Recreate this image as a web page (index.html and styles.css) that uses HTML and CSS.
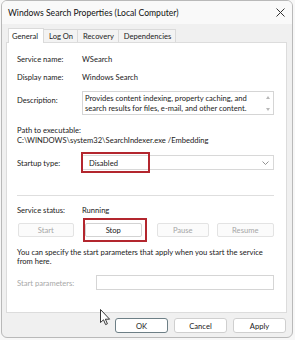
FILE: index.html
```html
<!DOCTYPE html>
<html>
<head>
<meta charset="utf-8">
<link rel="stylesheet" href="styles.css">
</head>
<body>
<div class="window">
  <div class="titlebar">
    <span class="title">Windows Search Properties (Local Computer)</span>
    <svg class="close" width="9" height="9" viewBox="0 0 9 9"><path d="M0.5 0.5 L8.5 8.5 M8.5 0.5 L0.5 8.5" stroke="#333" stroke-width="1"/></svg>
  </div>
  <div class="body">
    <div class="tabs">
      <div class="tab active">General</div>
      <div class="tab">Log On</div>
      <div class="tab">Recovery</div>
      <div class="tab">Dependencies</div>
    </div>
    <div class="panel">
      <div class="row r-name"><span class="label">Service name:</span><span>WSearch</span></div>
      <div class="row r-display"><span class="label">Display name:</span><span>Windows Search</span></div>
      <div class="row r-desc">
        <span class="label desc-label">Description:</span>
        <div class="descbox">
          <div class="desctext">Provides content indexing, property caching, and search results for files, e-mail, and other content.</div>
          <div class="scroll"><span class="arr up"></span><span class="arr down"></span></div>
        </div>
      </div>
      <div class="path-label">Path to executable:</div>
      <div class="path-value">C:\WINDOWS\system32\SearchIndexer.exe /Embedding</div>
      <div class="row r-startup">
        <span class="label">Startup type:</span>
        <div class="combo">
          <span class="combo-val">Disabled</span>
          <svg class="chev" width="7" height="4" viewBox="0 0 7 4"><path d="M0.5 0.5 L3.5 3.5 L6.5 0.5" fill="none" stroke="#777" stroke-width="0.8"/></svg>
          <div class="hl hl-combo"></div>
        </div>
      </div>
      <div class="sep"></div>
      <div class="row r-status"><span class="label">Service status:</span><span>Running</span></div>
      <div class="svc-buttons">
        <div class="btn disabled b-start">Start</div>
        <div class="btn b-stop">Stop<div class="hl hl-stop"></div></div>
        <div class="btn disabled b-pause">Pause</div>
        <div class="btn disabled b-resume">Resume</div>
      </div>
      <div class="info">You can specify the start parameters that apply when you start the service from here.</div>
      <div class="row r-params"><span class="label params-label">Start parameters:</span><div class="input"></div></div>
    </div>
    <div class="footer">
      <div class="btn fbtn default">OK</div>
      <div class="btn fbtn">Cancel</div>
      <div class="btn fbtn">Apply</div>
    </div>
    <svg class="cursor" width="11" height="17" viewBox="0 0 11 17"><path d="M0.5 0.5 L0.5 13.5 L3.5 10.8 L5.6 15.6 L7.4 14.8 L5.4 10.2 L9.6 10.2 Z" fill="#fff" stroke="#222" stroke-width="0.9" stroke-linejoin="round"/></svg>
  </div>
</div>
</body>
</html>
```
FILE: styles.css
```css
* { box-sizing: border-box; }
html, body { margin: 0; padding: 0; background: #f7f7f7; }
body {
  width: 295px; height: 340px; overflow: hidden;
  font-family: Lato, "Noto Sans", sans-serif;
  font-size: 7.6px; color: #1a1a1a;
}
.window {
  position: relative;
  margin-left: 1px;
  width: 292px; height: 338px;
  border: 1px solid #b9b9b9;
  border-radius: 6px;
  background: #f0f0f0;
  overflow: hidden;
}
.titlebar {
  height: 23px; background: #f9f9f9;
  display: flex; align-items: center; justify-content: space-between;
  padding: 0 6px 0 6px;
}
.title { font-size: 8.6px; color: #111; }
.close { margin-right: 1px; }
.body { position: relative; padding: 4px 5px 0 4px; }
.tabs { display: flex; height: 14px; align-items: flex-end; padding-left: 2px; }
.tab {
  height: 13px; padding: 0 4px 0 5px; line-height: 12px;
  border: 1px solid #dadada; border-bottom: none; border-left: none;
  background: #f3f3f3; color: #222;
}
.tab.active {
  height: 15px; background: #fff; border-left: 1px solid #dadada;
  margin-bottom: -1px; position: relative; z-index: 1; padding: 0 5px 0 3px; line-height: 14px;
}
.panel {
  background: #fff; border: 1px solid #dcdcdc;
  height: 271px;
  padding: 10px 12px 0 10px;
}
.row { display: flex; align-items: center; }
.label { width: 65px; flex: none; }
.r-name { height: 12px; }
.r-display { height: 12px; margin-top: 6px; }
.r-desc { margin-top: 8px; align-items: flex-start; }
.desc-label { margin-top: 4px; }
.descbox {
  width: 194px; height: 24px; border: 1px solid #d5d5d5;
  display: flex; padding: 1px 0 0 2px;
}
.desctext { flex: 1; line-height: 10px; color: #222; }
.scroll { width: 10px; display: flex; flex-direction: column; align-items: center; justify-content: space-between; padding: 3px 0 3px; }
.arr { width: 0; height: 0; border-left: 2.5px solid transparent; border-right: 2.5px solid transparent; }
.arr.up { border-bottom: 3px solid #b8b8b8; }
.arr.down { border-top: 3px solid #b8b8b8; }
.path-label { margin-top: 9px; height: 12px; line-height: 12px; }
.path-value { height: 11px; line-height: 11px; margin-top: -1px; }
.r-startup { margin-top: 9px; }
.combo {
  position: relative; width: 194px; height: 15px; border: 1px solid #d8d8d8;
  display: flex; align-items: center; justify-content: space-between; padding: 0 4px 0 6px;
}
.hl { position: absolute; border: 2px solid #b3262e; }
.hl-combo { left: -2px; top: -4px; width: 69px; height: 21px; }
.sep { margin-top: 25px; height: 1px; background: #dedede; width: 257px; }
.r-status { margin-top: 8px; height: 12px; }
.svc-buttons { margin-top: 7px; display: flex; height: 14px; }
.btn {
  position: relative; height: 14px; border: 1px solid #d3d3d3; border-radius: 2px;
  display: flex; align-items: center; justify-content: center; background: #fff;
}
.btn.disabled { color: #a6a6a6; background: #fbfbfb; border-color: #e3e3e3; }
.b-start { width: 56px; margin-left: 1px; }
.b-stop { width: 58px; margin-left: 11px; }
.b-pause { width: 52px; margin-left: 15px; }
.b-resume { width: 58px; margin-left: 8px; }
.hl-stop { left: -3px; top: -6px; width: 64px; height: 24px; }
.info { margin-top: 11px; line-height: 9px; width: 262px; }
.r-params { margin-top: 9px; }
.params-label { width: 79px; color: #a8a8a8; }
.input { width: 180px; height: 15px; border: 1px solid #d5d5d5; }
.footer { display: flex; justify-content: flex-end; gap: 6px; padding: 5px 1px 0 0; }
.fbtn { width: 53px; height: 15px; border-color: #cfcfcf; border-radius: 3px; }
.fbtn.default { border-color: #6d7f86; }
.cursor { position: absolute; left: 98px; top: 285px; }
```
